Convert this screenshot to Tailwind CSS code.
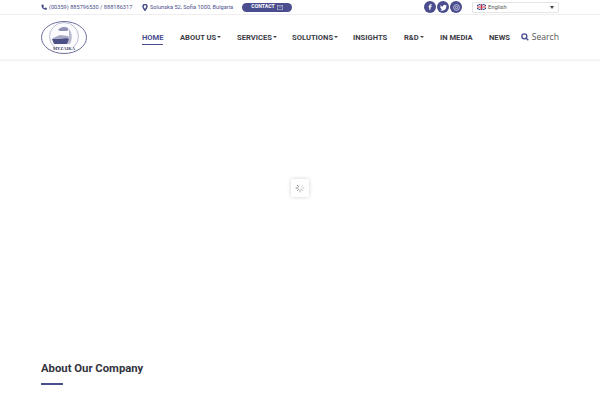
<!DOCTYPE html>
<html lang="en">
<head>
    <meta charset="UTF-8">
    <title>Home</title>
    <script src="https://cdn.jsdelivr.net/npm/@tailwindcss/browser@4"></script>
</head>
<body class="bg-white h-[400px] w-[600px] overflow-hidden font-['Roboto',sans-serif] flex flex-col">
    <!-- top bar -->
    <div class="h-[15px] shrink-0 border-b border-[#f0f0f0] pl-[41px] pr-[41px] flex items-center text-[#4b4f8c] text-[5.65px]">
        <svg class="w-[6px] h-[6px] mr-[2px]" viewBox="0 0 24 24" fill="#4a4e8a"><path d="M6 2l4 1 2 6-3 2c1 3 3 5 6 6l2-3 6 2 1 4c0 2-2 3-4 3C10 23 1 14 2 6c0-2 2-4 4-4z"/></svg>
        <span class="w-[85px] whitespace-nowrap">(00359) 885796530 / 888186317</span>
        <svg class="w-[6px] h-[7px] ml-[8px] mr-[2px]" viewBox="0 0 24 28" fill="none" stroke="#4a4e8a" stroke-width="6"><path d="M12 25C6 17 4 14 4 10a8 8 0 0 1 16 0c0 4-2 7-8 15z"/></svg>
        <span class="w-[85px] whitespace-nowrap">Solunska 52, Sofia 1000, Bulgaria</span>
        <div class="ml-[7px] w-[50px] h-[9px] rounded-full bg-[#4a4e8e] text-white flex items-center justify-center gap-[2px] text-[5.2px] font-bold">
            <span>CONTACT</span>
            <svg class="w-[6px] h-[5px]" viewBox="0 0 12 10" fill="none" stroke="#cfd0e6" stroke-width="1"><rect x="0.5" y="0.5" width="11" height="9"/><path d="M1 1l5 4 5-4"/></svg>
        </div>
        <div class="ml-auto flex items-center gap-[1px]">
            <div class="w-[12px] h-[12px] rounded-full bg-[#4a4e8e] text-white flex items-center justify-center">
                <svg class="w-[6px] h-[6px]" viewBox="0 0 24 24" fill="#fff"><path d="M14 23V13h4l1-4h-5V7c0-1 .5-2 2-2h3V1h-4c-4 0-6 2-6 6v2H6v4h3v10z"/></svg>
            </div>
            <div class="w-[12px] h-[12px] rounded-full bg-[#4a4e8e] flex items-center justify-center">
                <svg class="w-[7px] h-[7px]" viewBox="0 0 24 24" fill="#fff"><path d="M23 5c-1 .4-2 .6-3 .7 1-.6 2-1.600 2.300-2.700-1 .6-2 1-3.300 1.300a5 5 0 0 0-8.600 4.500C7 8.600 3.500 6.800 1.500 4c-1.200 2-.6 5 1.500 6.500-.8 0-1.600-.2-2.200-.6 0 2.400 1.700 4.500 4 5-.7.2-1.500.2-2.200 0 .6 2 2.500 3.400 4.700 3.500A10 10 0 0 1 0 20.400 14 14 0 0 0 21.600 8c1-.7 1.800-1.700 1.400-3z"/></svg>
            </div>
            <div class="w-[12px] h-[12px] rounded-full bg-[#4a4e8e] flex items-center justify-center">
                <svg class="w-[7px] h-[7px]" viewBox="0 0 24 24" fill="none" stroke="#cfd0e6" stroke-width="3"><circle cx="12" cy="12" r="10"/><circle cx="12" cy="12" r="4"/></svg>
            </div>
            <div class="ml-[9px] w-[87px] h-[11px] border border-[#e5e5e5] rounded-[1px] flex items-center pl-[4px] pr-[4px] text-[5.8px] text-[#555]">
                <svg class="w-[9px] h-[6px] mr-[2px]" viewBox="0 0 18 12"><rect width="18" height="12" fill="#3b4a8c"/><path d="M0 0l18 12M18 0L0 12" stroke="#fff" stroke-width="2"/><path d="M9 0v12M0 6h18" stroke="#fff" stroke-width="4"/><path d="M9 0v12M0 6h18" stroke="#c8334a" stroke-width="2"/></svg>
                <span>English</span>
                <span class="ml-auto w-0 h-0 border-l-[2.5px] border-r-[2.5px] border-t-[3px] border-l-transparent border-r-transparent border-t-[#444]"></span>
            </div>
        </div>
    </div>

    <!-- main nav -->
    <div class="h-[45px] shrink-0 pl-[41px] pr-[41px] flex items-center shadow-[0_1px_3px_rgba(0,0,0,0.06)] border-b border-[#f3f3f3]">
        <svg class="w-[46px] h-[33px] shrink-0" viewBox="0 0 46 33" fill="none">
            <ellipse cx="23" cy="16.500" rx="22.500" ry="16" fill="#fff" stroke="#5a5c8e" stroke-width="0.9"/>
            <ellipse cx="23" cy="15.500" rx="14.500" ry="14" fill="#fbfbfd" stroke="#8f91b4" stroke-width="0.6"/>
            <path d="M17 9c2-3 7-4 10-2 1 2 0 3-2 3h-6z" fill="#8f91b4"/>
            <path d="M28 8c3 3 4 10 1 15h-3l2-8z" fill="#b9bace"/>
            <path d="M11 18l15-1 2 1-2 5H13z" fill="#4d5087"/>
            <path d="M12 17l7-3 8 1 1 2-16 1z" fill="#a6a8c4"/>
            <rect x="14" y="25" width="18" height="5" fill="#fff"/>
            <text x="23" y="29.300" text-anchor="middle" font-size="4.500" font-weight="700" fill="#3d3f70" font-family="Liberation Serif, serif">MYZAIKA</text>
        </svg>
        <nav class="ml-[55px] mt-[1px] flex items-center text-[7.6px] font-bold text-[#3c3c46] whitespace-nowrap">
            <a class="w-[21px] text-[#4a4e8e] relative">HOME<span class="absolute left-0 right-0 top-[12px] h-[1px] bg-[#4a4e8e]"></span></a>
            <a class="ml-[17px] w-[40px] flex items-center">ABOUT US<span class="ml-[1px] w-0 h-0 border-l-[2px] border-r-[2px] border-t-[2px] border-l-transparent border-r-transparent border-t-[#444]"></span></a>
            <a class="ml-[17px] w-[39px] flex items-center">SERVICES<span class="ml-[1px] w-0 h-0 border-l-[2px] border-r-[2px] border-t-[2px] border-l-transparent border-r-transparent border-t-[#444]"></span></a>
            <a class="ml-[16px] w-[45px] flex items-center">SOLUTIONS<span class="ml-[1px] w-0 h-0 border-l-[2px] border-r-[2px] border-t-[2px] border-l-transparent border-r-transparent border-t-[#444]"></span></a>
            <a class="ml-[16px] w-[33px]">INSIGHTS</a>
            <a class="ml-[18px] w-[19px] flex items-center">R&amp;D<span class="ml-[1px] w-0 h-0 border-l-[2px] border-r-[2px] border-t-[2px] border-l-transparent border-r-transparent border-t-[#444]"></span></a>
            <a class="ml-[17px] w-[32px]">IN MEDIA</a>
            <a class="ml-[17px] w-[20px]">NEWS</a>
        </nav>
        <div class="ml-auto mt-[1px] flex items-center gap-[3px] text-[8.6px] text-[#555] font-['Open_Sans',sans-serif]">
            <svg class="w-[8px] h-[8px]" viewBox="0 0 24 24" fill="none" stroke="#4a4e8e" stroke-width="4"><circle cx="10" cy="10" r="7.500"/><path d="M15.500 15.500L22 22"/></svg>
            <span>Search</span>
        </div>
    </div>

    <!-- preloader area -->
    <div class="flex-1 flex flex-col">
        <div class="h-[300px] shrink-0 flex items-center justify-center pr-[1px] pb-[44px]">
            <div class="w-[18px] h-[18px] bg-white shadow-[0_0_4px_rgba(0,0,0,0.18)] flex items-center justify-center">
                <svg class="w-[10px] h-[10px]" viewBox="0 0 20 20" fill="none" stroke-width="2" stroke-linecap="round">
                    <path d="M10 2v4" stroke="#eee"/>
                    <path d="M15.500 4.500l-2.500 2.500" stroke="#ddd"/>
                    <path d="M18 10h-4" stroke="#ccc"/>
                    <path d="M15.500 15.500L13 13" stroke="#bbb"/>
                    <path d="M10 18v-4" stroke="#aaa"/>
                    <path d="M4.500 15.500L7 13" stroke="#999"/>
                    <path d="M2 10h4" stroke="#888"/>
                    <path d="M4.500 4.500L7 7" stroke="#777"/>
                </svg>
            </div>
        </div>
        <div class="pl-[41px]">
            <h2 class="text-[11.3px] leading-[14px] font-bold text-[#33333d] mt-[2px]">About Our Company</h2>
            <div class="w-[22px] h-[2px] bg-[#4a4e8e] mt-[7px]"></div>
        </div>
    </div>
</body>
</html>
